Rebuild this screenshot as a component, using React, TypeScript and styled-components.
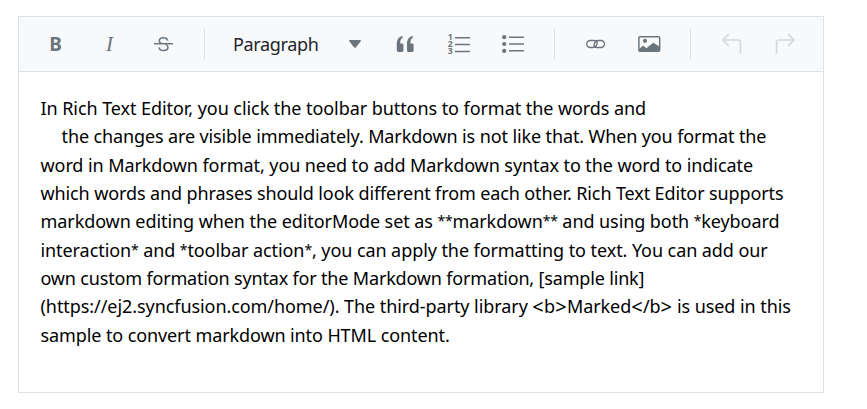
import React from 'react';
import styled, { createGlobalStyle } from 'styled-components';

const GlobalStyle = createGlobalStyle`
  body {
    margin: 0;
    background: #fff;
    font-family: 'Noto Sans', 'Open Sans', sans-serif;
  }
`;

const Editor = styled.section`
  box-sizing: border-box;
  width: 806px;
  height: 377px;
  margin: 16px 0 0 18px;
  border: 1px solid #dee2e6;
  background: #fff;
`;

const Toolbar = styled.header`
  display: flex;
  align-items: center;
  box-sizing: border-box;
  height: 55px;
  padding-left: 9px;
  border-bottom: 1px solid #dee2e6;
  background: #f8f9fa;
`;

const ToolButton = styled.button`
  display: flex;
  flex: none;
  align-items: center;
  justify-content: center;
  width: 54px;
  height: 40px;
  padding: 0;
  border: 0;
  background: transparent;
  color: #6c757d;

  &:disabled {
    color: #d5d8dc;
  }
`;

const Separator = styled.span`
  flex: none;
  width: 1px;
  height: 32px;
  margin: 0 13px 0 14px;
  background: #dee2e6;
`;

const FormatSelect = styled.button`
  display: flex;
  flex: none;
  align-items: center;
  justify-content: space-between;
  width: 160px;
  height: 40px;
  padding: 0 17px 0 15px;
  border: 0;
  background: transparent;
  color: #212529;
  font: 18px/28px 'Noto Sans', 'Open Sans', sans-serif;
  letter-spacing: -0.35px;
`;

const Icon = styled.svg`
  display: block;
  width: 24px;
  height: 24px;
  fill: none;
  stroke: currentColor;
  stroke-width: 1.5;
`;

const Caret = styled.svg`
  display: block;
  width: 12px;
  height: 8px;
  fill: #6c757d;
`;

const Glyph = styled.text<{ $face: string; $size: number; $bold?: boolean; $italic?: boolean }>`
  fill: currentColor;
  stroke: none;
  text-anchor: middle;
  font-family: ${(p) => p.$face};
  font-size: ${(p) => p.$size}px;
  font-weight: ${(p) => (p.$bold ? 700 : 400)};
  font-style: ${(p) => (p.$italic ? 'italic' : 'normal')};
`;

const Content = styled.div`
  padding: 22px 21px 0 21.5px;
  color: #000;
  font-size: 18px;
  line-height: 28.35px;
`;

const Line = styled.div<{ $tracking: number; $indent?: number }>`
  height: 28.35px;
  padding-left: ${(p) => p.$indent ?? 0}px;
  letter-spacing: ${(p) => p.$tracking}px;
  white-space: nowrap;
`;

const Asterisk = styled.span`
  font-size: 14px;
  line-height: 0;
  letter-spacing: -0.2px;
  vertical-align: 2.5px;
`;

const Angle = styled.span`
  font-size: 20px;
  line-height: 0;
  letter-spacing: 0.3px;
  vertical-align: -0.5px;
`;

const sans = "'Noto Sans', sans-serif";

const lines = [
  { text: 'In Rich Text Editor, you click the toolbar buttons to format the words and', tracking: -0.065 },
  { text: 'the changes are visible immediately. Markdown is not like that. When you format the', tracking: -0.12, indent: 21 },
  { text: 'word in Markdown format, you need to add Markdown syntax to the word to indicate', tracking: -0.08 },
  { text: 'which words and phrases should look different from each other. Rich Text Editor supports', tracking: -0.115 },
  { text: 'markdown editing when the editorMode set as **markdown** and using both *keyboard', tracking: -0.075 },
  { text: 'interaction* and *toolbar action*, you can apply the formatting to text. You can add our', tracking: -0.075 },
  { text: 'own custom formation syntax for the Markdown formation, [sample link]', tracking: -0.17 },
  { text: '(https://ej2.syncfusion.com/home/). The third-party library <b>Marked</b> is used in this', tracking: -0.068 },
  { text: 'sample to convert markdown into HTML content.', tracking: -0.1 },
];

/* Asterisks are set smaller and angle brackets larger than the words. */
const setMarks = (text: string) =>
  text.split(/([*]+|[<>])/).map((part, i) => {
    if (part.startsWith('*')) return <Asterisk key={i}>{part}</Asterisk>;
    if (part === '<' || part === '>') return <Angle key={i}>{part}</Angle>;
    return part;
  });

export default function App() {
  return (
    <>
      <GlobalStyle />
      <Editor>
        <Toolbar>
          <ToolButton aria-label="Bold">
            <Icon viewBox="0 0 24 24">
              <Glyph $face={sans} $size={19} $bold x="12.6" y="19">B</Glyph>
            </Icon>
          </ToolButton>
          <ToolButton aria-label="Italic">
            <Icon viewBox="0 0 24 24">
              <Glyph $face="'Liberation Serif', serif" $size={21} $italic x="12.6" y="19">I</Glyph>
            </Icon>
          </ToolButton>
          <ToolButton aria-label="Strikethrough">
            <Icon viewBox="0 0 24 24">
              <path d="M16.6 8.6C16.2 6.7 14.8 5.7 12.5 5.7C10 5.7 8.3 6.9 8.3 8.9C8.3 10.3 9.2 11.2 10.8 11.8M14.6 12.4C16.2 13 17 13.9 17 15.3C17 17.3 15.2 18.5 12.6 18.5C10 18.5 8.3 17.3 8 15.3" />
              <path d="M3 11.7H22" />
            </Icon>
          </ToolButton>
          <Separator />
          <FormatSelect>
            Paragraph
            <Caret viewBox="0 0 12 8">
              <path d="M0.9 0H11.1Q12.4 0.4 11.6 1.6L7 7.2Q6 8.2 5 7.2L0.4 1.6Q-0.4 0.4 0.9 0Z" />
            </Caret>
          </FormatSelect>
          <ToolButton aria-label="Quotation">
            <Icon viewBox="0 0 24 24">
              <path
                fill="currentColor"
                stroke="none"
                d="M9.6 4V6.1C7.9 6.6 7.2 8.3 7.2 11.6H9Q10.4 11.6 10.4 13V18.6Q10.4 20 9 20H5.2Q3.8 20 3.8 18.6V12.2C3.8 7.6 5.7 4.6 9.6 4ZM19.8 4V6.1C18.1 6.6 17.4 8.3 17.4 11.6H19.2Q20.6 11.6 20.6 13V18.6Q20.6 20 19.2 20H15.4Q14 20 14 18.6V12.2C14 7.6 15.9 4.6 19.8 4Z"
              />
            </Icon>
          </ToolButton>
          <ToolButton aria-label="Numbered list">
            <Icon viewBox="0 0 24 24">
              <path d="M8 5.7H23M8 12.4H23M8 19.4H23" />
              <Glyph $face={sans} $size={8.6} $bold x="3.2" y="7.8">1</Glyph>
              <Glyph $face={sans} $size={8.6} $bold x="3.2" y="14.8">2</Glyph>
              <Glyph $face={sans} $size={8.6} $bold x="3.2" y="21.6">3</Glyph>
            </Icon>
          </ToolButton>
          <ToolButton aria-label="Bulleted list">
            <Icon viewBox="0 0 24 24">
              <path d="M8 5.3H23M8 12H23M8 18.8H23" />
              <g fill="currentColor" stroke="none">
                <circle cx="3.2" cy="5.2" r="2.1" />
                <circle cx="3.2" cy="12" r="2.1" />
                <circle cx="3.2" cy="18.9" r="2.1" />
              </g>
            </Icon>
          </ToolButton>
          <Separator />
          <ToolButton aria-label="Insert link">
            <Icon viewBox="0 0 24 24">
              <path
                strokeWidth="1.35"
                d="M9.4 15.5H7.2A3.5 3.5 0 0 1 7.2 8.5H11.2C13.6 8.5 14.6 10 14 12C13.4 14.2 12 15.5 9.4 15.5M15.8 8.5H18A3.5 3.5 0 0 1 18 15.5H14C11.6 15.5 10.6 14 11.2 12C11.8 9.8 13.2 8.5 15.8 8.5"
              />
            </Icon>
          </ToolButton>
          <ToolButton aria-label="Insert image">
            <Icon viewBox="0 0 24 24">
              <rect x="1.9" y="4.7" width="20.8" height="14.6" rx="1.3" />
              <path fill="currentColor" stroke="none" d="M2 17L6.3 13.5L9.3 16.2L16.3 10.8L22.5 14.6V19.5H2Z" />
              <circle cx="8" cy="8.8" r="2.1" fill="currentColor" stroke="none" />
            </Icon>
          </ToolButton>
          <Separator />
          <ToolButton aria-label="Undo" disabled>
            <Icon viewBox="0 0 24 24">
              <path strokeWidth="1.7" d="M9.7 2.2L4 8L9.7 13.8M4 8H19.2Q21.4 8 21.4 10.3V21.8" />
            </Icon>
          </ToolButton>
          <ToolButton aria-label="Redo" disabled>
            <Icon viewBox="0 0 24 24">
              <path strokeWidth="1.7" d="M15.3 2.2L21 8L15.3 13.8M21 8H5.8Q3.6 8 3.6 10.3V21.8" />
            </Icon>
          </ToolButton>
        </Toolbar>
        <Content>
          {lines.map((line) => (
            <Line key={line.text} $tracking={line.tracking} $indent={line.indent}>
              {setMarks(line.text)}
            </Line>
          ))}
        </Content>
      </Editor>
    </>
  );
}
